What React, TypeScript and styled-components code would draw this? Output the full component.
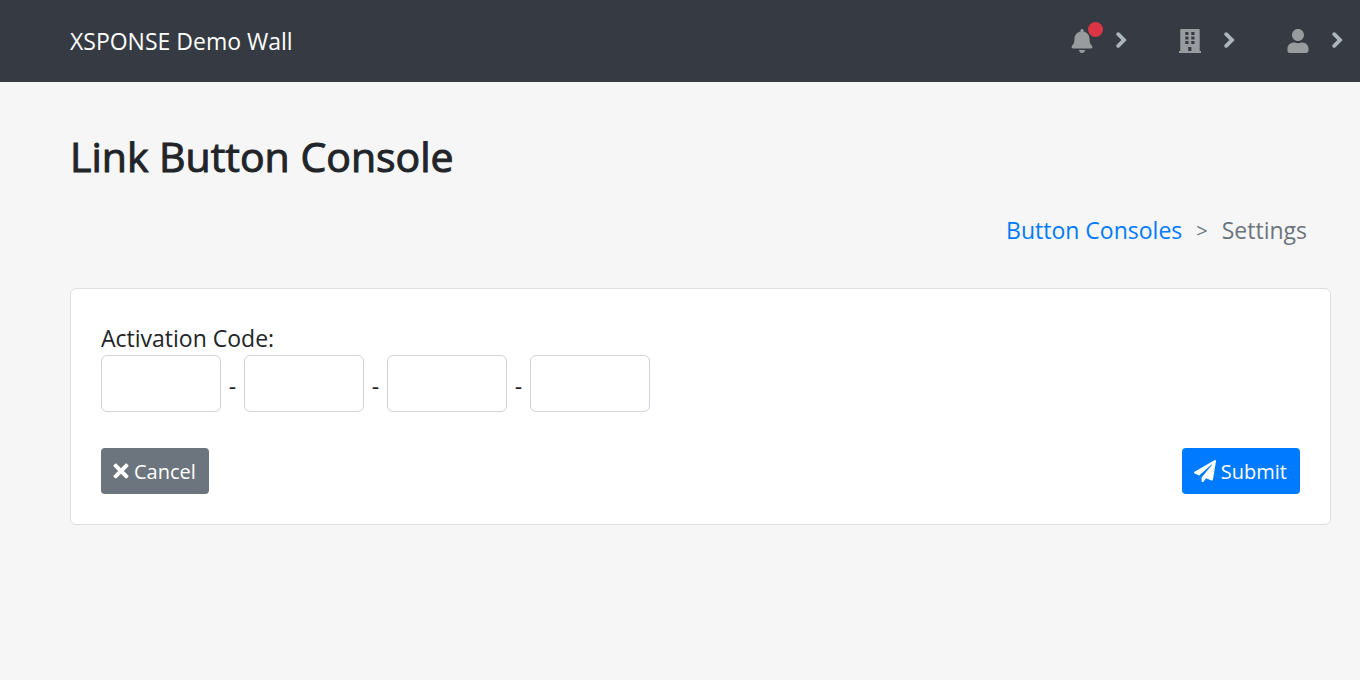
import React from "react";
import styled, { createGlobalStyle } from "styled-components";
import { FaBell, FaPaperPlane, FaUser } from "react-icons/fa";

const GlobalStyle = createGlobalStyle`
  *, *::before, *::after { box-sizing: border-box; }
  body {
    margin: 0;
    background: #f6f6f6;
    color: #212529;
    font-family: "Segoe UI", "Open Sans", "Noto Sans", sans-serif;
    font-size: 23px;
    line-height: 36px;
  }
`;

const Header = styled.header`
  display: flex;
  align-items: center;
  justify-content: space-between;
  height: 82px;
  padding: 0 17px 0 70px;
  background: #363a42;
`;

const Brand = styled.a`
  color: #fff;
  font-size: 23px;
  text-decoration: none;
`;

const Nav = styled.nav`
  display: flex;
  gap: 52px;
`;

const NavButton = styled.button`
  display: flex;
  align-items: center;
  justify-content: space-between;
  width: 56px;
  height: 36px;
  padding: 0;
  border: 0;
  background: none;
  color: #adb5bd;
  cursor: pointer;
`;

const NavIcon = styled.span`
  position: relative;
  display: flex;
  justify-content: center;
  width: 22px;
  color: #999c9f;
  font-size: 24px;
`;

const Badge = styled.span`
  position: absolute;
  top: -7px;
  right: -10px;
  width: 15px;
  height: 15px;
  border-radius: 50%;
  background: #dc3545;
`;

const Main = styled.main`
  padding: 48px 29px 48px 70px;
`;

const Title = styled.h1`
  margin: 0;
  font-size: 41px;
  font-weight: 500;
  line-height: 52px;
  -webkit-text-stroke: 1px currentColor;
`;

const Breadcrumb = styled.nav`
  display: flex;
  justify-content: flex-end;
  gap: 14px;
  margin: 30px 0 40px;
  padding-right: 24px;
  color: #6c757d;
`;

const Crumb = styled.a`
  color: #007bff;
  text-decoration: none;
`;

const Separator = styled.span`
  font-size: 20px;
  line-height: 38px;
  height: 36px;
`;

const Card = styled.form`
  padding: 32px 30px 30px;
  border: 1px solid #dfdfdf;
  border-radius: 6px;
  background: #fff;
`;

const CodeGroup = styled.fieldset`
  margin: 0;
  padding: 0;
  border: 0;
`;

const CodeLabel = styled.legend`
  padding: 0;
  line-height: 34px;
`;

const CodeRow = styled.div`
  display: flex;
  align-items: center;
`;

const CodeInput = styled.input`
  width: 120px;
  height: 57px;
  padding: 8px 16px;
  border: 1px solid #ced4da;
  border-radius: 6px;
  background: #fff;
  color: #495057;
  font: inherit;
`;

const Dash = styled.span`
  width: 23px;
  padding-top: 4px;
  text-align: center;
`;

const Actions = styled.div`
  display: flex;
  justify-content: space-between;
  margin-top: 36px;
`;

const Button = styled.button<{ $tone: string }>`
  display: flex;
  align-items: center;
  gap: 5px;
  height: 46px;
  padding: 0 13px 0 12px;
  border: 0;
  border-radius: 4px;
  background: ${(p) => p.$tone};
  color: #fff;
  font-family: inherit;
  font-size: 20px;
  cursor: pointer;
`;

const Chevron = () => (
  <svg width="11" height="18" viewBox="0 0 11 18" fill="none" stroke="currentColor" strokeWidth="3.8" strokeLinejoin="miter" strokeLinecap="round" aria-hidden="true">
    <path d="M2.2 2.2 L8 8 L2.2 13.8" />
  </svg>
);

const Building = () => (
  <svg width="22" height="24" viewBox="0 0 22 24" fill="currentColor" fillRule="evenodd" aria-hidden="true">
    <path d="M2 0H20Q20.7 0 20.7 .7V22H22V24H0V22H1.3V.7Q1.3 0 2 0ZM6.3 3V6H9.5V3ZM12.3 3V6H15.5V3ZM6.3 7.5V10.5H9.5V7.5ZM12.3 7.5V10.5H15.5V7.5ZM6.3 12V15H9.5V12ZM12.3 12V15H15.5V12ZM9.2 18V22H12.4V18Z" />
  </svg>
);

const Cross = () => (
  <svg width="16" height="16" viewBox="-12 68 376 376" fill="currentColor" aria-hidden="true">
    <path d="M242.72 256l100.07-100.07c12.28-12.28 12.28-32.19 0-44.48l-22.24-22.24c-12.28-12.28-32.19-12.28-44.48 0L176 189.28 75.93 89.21c-12.28-12.28-32.19-12.28-44.48 0L9.21 111.45c-12.28 12.28-12.28 32.19 0 44.48L109.28 256 9.21 356.07c-12.28 12.28-12.28 32.19 0 44.48l22.24 22.24c12.28 12.28 32.2 12.28 44.48 0L176 322.72l100.07 100.07c12.28 12.28 32.2 12.28 44.48 0l22.24-22.24c12.28-12.28 12.28-32.19 0-44.48L242.72 256z" />
  </svg>
);

const parts = [1, 2, 3, 4];

export default function App() {
  return (
    <>
      <GlobalStyle />
      <Header>
        <Brand href="#">XSPONSE Demo Wall</Brand>
        <Nav aria-label="Account">
          <NavButton type="button" aria-label="Notifications">
            <NavIcon><FaBell /><Badge /></NavIcon>
            <Chevron />
          </NavButton>
          <NavButton type="button" aria-label="Organization">
            <NavIcon><Building /></NavIcon>
            <Chevron />
          </NavButton>
          <NavButton type="button" aria-label="User">
            <NavIcon><FaUser /></NavIcon>
            <Chevron />
          </NavButton>
        </Nav>
      </Header>
      <Main>
        <Title>Link Button Console</Title>
        <Breadcrumb aria-label="Breadcrumb">
          <Crumb href="#">Button Consoles</Crumb>
          <Separator>&gt;</Separator>
          <span>Settings</span>
        </Breadcrumb>
        <Card onSubmit={(e) => e.preventDefault()}>
          <CodeGroup>
            <CodeLabel>Activation Code:</CodeLabel>
            <CodeRow>
              {parts.map((n) => (
                <React.Fragment key={n}>
                  {n > 1 && <Dash>-</Dash>}
                  <CodeInput type="text" aria-label={`Activation code part ${n}`} />
                </React.Fragment>
              ))}
            </CodeRow>
          </CodeGroup>
          <Actions>
            <Button type="button" $tone="#6c757d"><Cross />Cancel</Button>
            <Button type="submit" $tone="#007bff"><FaPaperPlane size={22} />Submit</Button>
          </Actions>
        </Card>
      </Main>
    </>
  );
}
